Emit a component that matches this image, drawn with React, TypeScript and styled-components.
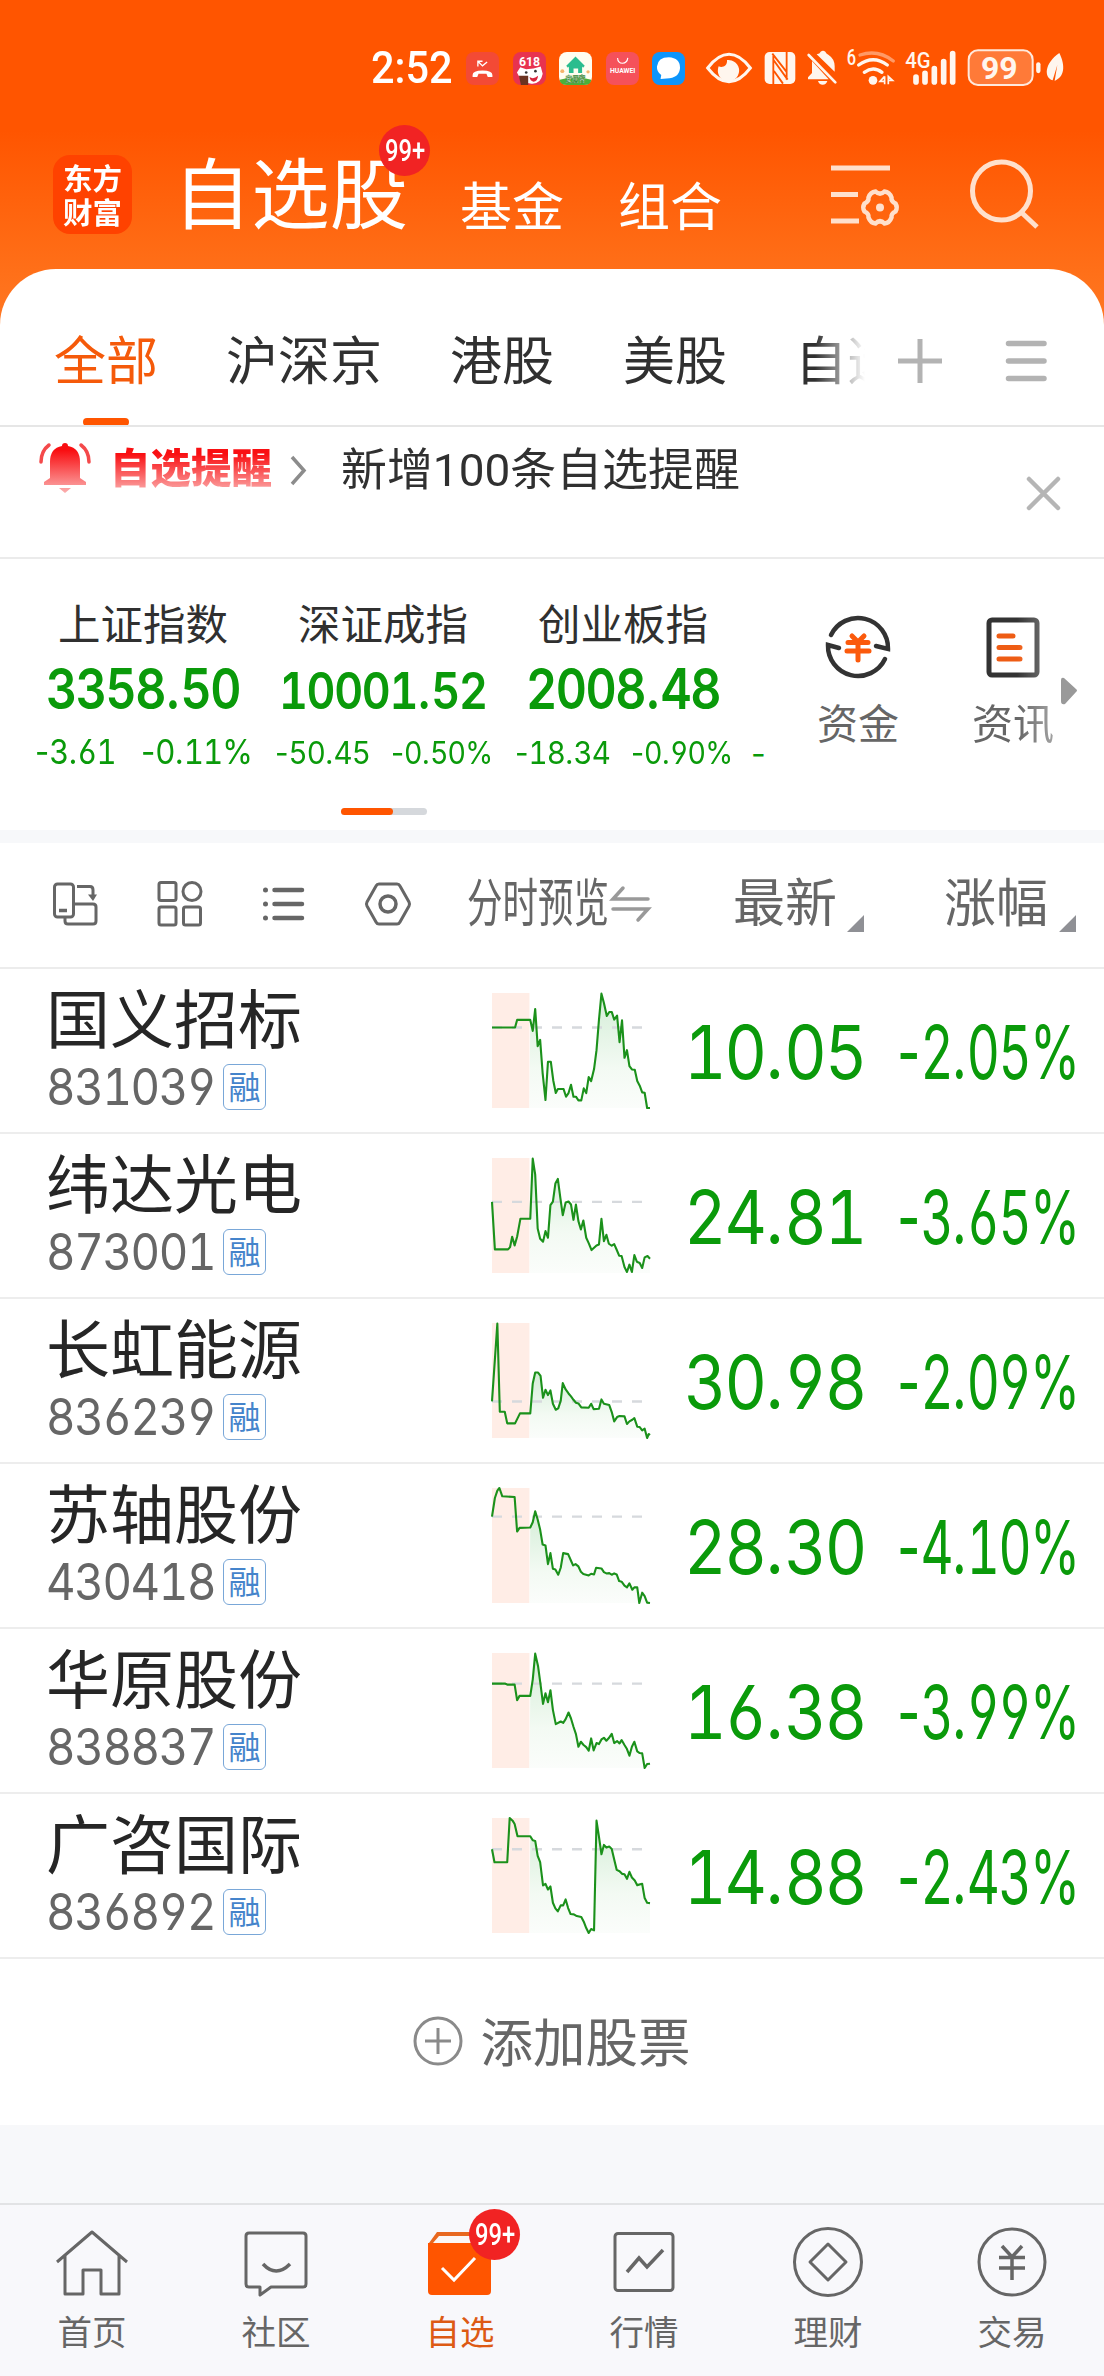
import React, { useLayoutEffect, useRef, useState } from 'react';
import styled, { createGlobalStyle } from 'styled-components';

const CJK = '"Noto Sans CJK SC", sans-serif';
const NUM = 'Inter, Roboto, "Noto Sans CJK SC", sans-serif';
const GREEN = '#0a9a0a';
const ORANGE = '#ff5500';

const Global = createGlobalStyle`
  * { box-sizing: border-box; }
  body { margin: 0; background: #f7f8fa; font-family: ${CJK}; color: #333; }
  svg { display: block; flex: none; overflow: visible; }
`;

/* ---------- text that is condensed or widened to a fixed measure ---------- */
const FitBox = styled.span<{ $w: number }>`
  display: block;
  flex: none;
  width: ${(p) => p.$w}px;
  white-space: nowrap;
`;
const FitInner = styled.span`
  display: inline-block;
  transform-origin: 0 50%;
`;
function Fit({ w, children }: { w: number; children: React.ReactNode }) {
  const ref = useRef<HTMLSpanElement>(null);
  const [scale, setScale] = useState(1);
  useLayoutEffect(() => {
    if (ref.current) setScale(w / ref.current.offsetWidth);
  }, [w, children]);
  return (
    <FitBox $w={w}>
      <FitInner ref={ref} style={{ transform: `scaleX(${scale})` }}>{children}</FitInner>
    </FitBox>
  );
}

/* digits are tabular, the signs between them keep their own widths */
const Digits = styled.span`
  font-feature-settings: 'tnum', 'cv03', 'cv04';
  letter-spacing: -0.03em;
`;
const Sign = styled.span`
  font-feature-settings: normal;
`;
function Figure({ value }: { value: string }) {
  return (
    <>
      {value.split(/([^0-9]+)/).filter(Boolean).map((part, i) =>
        /\d/.test(part) ? <Digits key={i}>{part}</Digits> : <Sign key={i}>{part}</Sign>,
      )}
    </>
  );
}

const Page = styled.div`
  width: 1104px;
  height: 2376px;
  display: flex;
  flex-direction: column;
  background: #f7f8fa;
  overflow: hidden;
`;

/* ---------- header ---------- */
const Top = styled.header`
  height: 340px;
  margin-bottom: -71px;
  flex: none;
  background: linear-gradient(180deg, #ff5500 0, #ff5500 130px, #ff7019 275px, #ff7a28 340px);
  color: #fff;
`;
const StatusBar = styled.div`
  height: 136px;
  padding-left: 371px;
  display: flex;
  align-items: center;
`;
const Clock = styled.div`
  font: 500 45px/50px Roboto, sans-serif;
  margin-right: 13px;
`;
const AppIcons = styled.div`
  display: flex;
  gap: 13.6px;
  margin-right: 21px;
`;
const Cluster = styled.div`
  display: flex;
`;
const TitleBar = styled.div`
  height: 133px;
  padding: 0 0 0 53px;
  display: flex;
`;
const Logo = styled.div`
  width: 79px;
  height: 79px;
  margin-top: 19px;
  border-radius: 17px;
  background: #ff4200;
  padding: 5px 0 0 10px;
  font: 700 29px/34px ${CJK};
`;
const MainTitle = styled.div`
  position: relative;
  margin: 6px 0 0 41px;
  font: 400 77px/96px ${CJK};
`;
const SubTitle = styled.div<{ $ml: number }>`
  margin: 33px 0 0 ${(p) => p.$ml}px;
  font: 400 52px/70px ${CJK};
`;
const HeadIcon = styled.div<{ $ml: number; $mt: number }>`
  margin: ${(p) => p.$mt}px 0 0 ${(p) => p.$ml}px;
`;
const Badge = styled.span<{ $x: number; $y: number }>`
  position: absolute;
  left: ${(p) => p.$x}px;
  top: ${(p) => p.$y}px;
  width: 51px;
  height: 51px;
  border-radius: 50%;
  background: #f12323;
  color: #fff;
  display: flex;
  justify-content: center;
  font: 500 32px/50px Roboto, sans-serif;
`;

/* ---------- tabs ---------- */
const Tabs = styled.nav`
  position: relative;
  height: 158px;
  flex: none;
  background: #fff;
  border-radius: 56px 56px 0 0;
  border-bottom: 2px solid #e6e6e6;
  padding-left: 54px;
  display: flex;
  font: 400 52px/70px ${CJK};
`;
const Tab = styled.div<{ $active?: boolean; $w: number; $gap: number }>`
  width: ${(p) => p.$w}px;
  margin-right: ${(p) => p.$gap}px;
  padding-top: 54px;
  flex: none;
  white-space: nowrap;
  overflow: hidden;
  color: ${(p) => (p.$active ? '#f55a0a' : '#303030')};
  &::after {
    content: '';
    display: ${(p) => (p.$active ? 'block' : 'none')};
    width: 46px;
    height: 8px;
    margin: 25px auto 0;
    border-radius: 4px;
    background: ${ORANGE};
  }
`;
const FadeTab = styled(Tab)`
  -webkit-mask-image: linear-gradient(90deg, #000 20px, transparent 70px);
  mask-image: linear-gradient(90deg, #000 20px, transparent 70px);
`;
const TabTool = styled.div<{ $mr: number; $mt: number }>`
  margin: ${(p) => p.$mt}px ${(p) => p.$mr}px 0 0;
`;

/* ---------- notice ---------- */
const Notice = styled.section`
  height: 132px;
  flex: none;
  background: #fff;
  border-bottom: 2px solid #ebebeb;
  padding-left: 39px;
  display: flex;
`;
const NoticeTag = styled.div`
  flex: none;
  width: 162px;
  height: 60px;
  margin: 9px 18px 0 19px;
  white-space: nowrap;
  font: 900 40.5px/60px ${CJK};
  background: linear-gradient(180deg, #f90f12 18px, #fb9a9a 52px);
  -webkit-background-clip: text;
  background-clip: text;
  color: transparent;
`;
const NoticeText = styled.div`
  margin: 14px 287px 0 35px;
  font: 400 45px/60px Roboto, ${CJK};
  color: #303030;
`;
const Shift = styled.div<{ $mt: number }>`
  margin-top: ${(p) => p.$mt}px;
`;

/* ---------- indices ---------- */
const Indices = styled.section`
  height: 271px;
  flex: none;
  background: #fff;
  display: flex;
`;
const IndexArea = styled.div`
  width: 768px;
  flex: none;
  overflow: hidden;
  display: flex;
  flex-direction: column;
`;
const IndexRow = styled.div`
  display: flex;
  padding-left: 23px;
`;
const IndexCell = styled.div`
  width: 240px;
  flex: none;
  display: flex;
  flex-direction: column;
  align-items: center;
  color: ${GREEN};
`;
const IndexName = styled.div`
  margin-top: 33px;
  font: 400 42.5px/60px ${CJK};
  color: #303030;
`;
const IndexValue = styled.div<{ $size: number; $lh: number }>`
  height: 69px;
  font: 600 ${(p) => p.$size}px/${(p) => p.$lh}px ${NUM};
`;
const IndexChange = styled.div<{ $size: number; $lh: number }>`
  width: 100%;
  height: 50px;
  padding: 0 10px 0 12px;
  display: flex;
  justify-content: space-between;
  font: 400 ${(p) => p.$size}px/${(p) => p.$lh}px ${NUM};
`;
const NextDash = styled.div`
  padding: 165px 0 0 8px;
  font: 400 32px/60px ${NUM};
  color: ${GREEN};
`;
const Pager = styled.div`
  width: 86px;
  height: 7px;
  margin: 24px 0 0 341px;
  border-radius: 4px;
  background: #d5d8dc;
  &::before {
    content: '';
    display: block;
    width: 52px;
    height: 7px;
    border-radius: 4px;
    background: ${ORANGE};
  }
`;
const Quick = styled.div<{ $ml: number; $fade?: boolean }>`
  margin-left: ${(p) => p.$ml}px;
  padding-top: 55px;
  display: flex;
  flex-direction: column;
  align-items: center;
  font: 400 41px/56px ${CJK};
  color: #666;
  ${(p) => p.$fade && 'mask-image: linear-gradient(90deg, #000 45px, rgba(0,0,0,.6) 82px);'}
`;
const QuickLabel = styled.div`
  margin-top: 13px;
  white-space: nowrap;
`;
const Band = styled.div`
  height: 13px;
  flex: none;
`;

/* ---------- table ---------- */
const Tools = styled.section`
  height: 126px;
  flex: none;
  background: #fff;
  border-bottom: 2px solid #ececec;
  padding: 0 0 2px 51px;
  display: flex;
  align-items: center;
  color: #666;
  font: 400 52px/70px ${CJK};
`;
const ToolIcon = styled.div<{ $mr: number }>`
  margin-right: ${(p) => p.$mr}px;
`;
const Column = styled.div<{ $mr: number; $gap: number }>`
  display: flex;
  flex: none;
  align-items: center;
  gap: ${(p) => p.$gap}px;
  margin-right: ${(p) => p.$mr}px;
  margin-top: -8px;
`;
const Swap = styled.div`
  margin-top: 7px;
`;
const Corner = styled.i`
  flex: none;
  width: 17px;
  height: 17px;
  margin-top: 47px;
  background: #8f9095;
  clip-path: polygon(100% 0, 100% 100%, 0 100%);
`;
const Row = styled.div`
  height: 165px;
  flex: none;
  background: #fff;
  border-bottom: 2px solid #ededed;
  padding-left: 46px;
  display: flex;
`;
const Stock = styled.div`
  width: 446px;
  flex: none;
  padding-top: 1px;
`;
const Name = styled.div`
  height: 91px;
  font: 400 64px/90px ${CJK};
  color: #262626;
`;
const CodeLine = styled.div`
  display: flex;
  align-items: center;
  gap: 8px;
`;
const Code = styled.div`
  font: 400 51px/52px ${NUM};
  color: #666;
`;
const Tag = styled.div`
  width: 43px;
  height: 46px;
  border: 1.5px solid #79a7d8;
  border-radius: 6px;
  text-align: center;
  font: 400 32px/40px ${CJK};
  color: #4584cb;
`;
const ChartBox = styled.div`
  width: 192px;
  flex: none;
  padding-top: 24px;
`;
const Price = styled.div<{ $w: number }>`
  width: ${(p) => p.$w}px;
  flex: none;
  font: 400 74px/166px ${NUM};
  color: ${GREEN};
`;
const AddRow = styled.div`
  height: 166px;
  flex: none;
  background: #fff;
  padding-bottom: 3px;
  display: flex;
  align-items: center;
  justify-content: center;
  gap: 17px;
  font: 400 52.5px/70px ${CJK};
  color: #666;
`;
const AddLabel = styled.div`
  margin-top: -4px;
`;

/* ---------- bottom navigation ---------- */
const BottomNav = styled.nav`
  margin-top: auto;
  height: 173px;
  flex: none;
  border-top: 2px solid #e2e3e5;
  background: #f8f8fb;
  display: grid;
  grid-template-columns: repeat(6, 184px);
`;
const NavItem = styled.div<{ $active?: boolean }>`
  position: relative;
  padding-top: 21px;
  display: flex;
  flex-direction: column;
  align-items: center;
  gap: 5px;
  font: 400 34.5px/50px ${CJK};
  color: ${(p) => (p.$active ? '#dd5a14' : '#666')};
`;

/* ---------- stock chart ---------- */
function Spark({ base, pts, id }: { base: number; pts: string; id: string }) {
  const list = pts.split(' ').map((s) => s.split(',').map(Number));
  const after = list.filter(([x]) => x >= 91);
  const area = `M${after.map((p) => p.join(' ')).join('L')}L384 346L91 346Z`;
  return (
    <svg width="158" height="115" viewBox="0 0 384 346" preserveAspectRatio="none">
      <defs>
        <linearGradient id={id} x1="0" y1="0" x2="0" y2="1">
          <stop offset="0" stopColor="#d3edd6" />
          <stop offset="0.65" stopColor="#f3faf3" />
          <stop offset="1" stopColor="#fbfdfb" />
        </linearGradient>
      </defs>
      <rect x="0" y="0" width="91" height="346" fill="#ffede6" />
      <path d={area} fill={`url(#${id})`} />
      <path d={`M0 ${base}H365`} stroke="#d6d9dd" strokeWidth="2.4" strokeDasharray="10 10" vectorEffect="non-scaling-stroke" />
      <path d={`M${list.map((p) => p.join(' ')).join('L')}`} fill="none" stroke="#1b911b" strokeWidth="2.1" strokeLinejoin="round" vectorEffect="non-scaling-stroke" />
    </svg>
  );
}

const STOCKS = [
  { name: '国义招标', code: '831039', price: '10.05', pct: '-2.05%', base: 104,
    pts: '0,104 56,104 61,81 93,81 99,114 105,48 111,160 117,141 123,240 130,322 136,207 143,207 149,264 155,301 160,289 174,289 180,312 186,301 192,276 198,312 204,312 210,323 217,323 223,287 229,301 235,253 241,265 248,229 254,172 260,80 266,2 272,30 279,69 285,57 291,57 297,80 304,68 310,148 316,82 322,195 328,172 334,220 340,230 347,231 353,265 359,279 365,299 371,300 377,346 384,346' },
  { name: '纬达光电', code: '873001', price: '24.81', pct: '-3.65%', base: 132,
    pts: '0,132 7,275 39,275 44,268 49,237 55,263 61,237 69,183 93,183 99,2 105,50 111,212 117,243 124,252 130,220 136,240 142,142 148,131 154,77 160,63 166,119 172,172 179,134 186,131 192,140 198,186 204,140 210,190 216,215 222,188 229,240 235,256 242,277 254,263 260,260 266,183 272,250 278,231 284,258 291,264 297,259 303,276 309,294 315,295 322,328 328,343 334,321 340,343 346,292 352,312 359,316 365,331 371,299 378,295 384,303' },
  { name: '长虹能源', code: '836239', price: '30.98', pct: '-2.09%', base: 236,
    pts: '0,236 13,2 19,267 31,267 37,302 56,302 62,287 68,272 93,272 99,182 105,149 112,149 118,159 124,225 130,201 136,217 142,203 148,243 155,261 161,257 167,234 172,181 179,200 186,212 192,221 198,231 204,240 210,242 217,254 235,255 241,243 247,259 260,258 266,230 272,243 285,247 291,268 297,296 304,283 310,280 322,281 328,304 334,296 341,291 346,286 353,312 359,313 365,323 371,318 377,346 381,334 384,337' },
  { name: '苏轴股份', code: '430418', price: '28.30', pct: '-4.10%', base: 86,
    pts: '0,86 7,30 13,8 18,0 25,25 55,27 61,131 67,120 93,119 99,103 105,70 111,95 117,125 123,170 130,173 136,229 142,196 148,243 154,245 161,261 167,240 173,196 185,199 191,216 197,233 203,229 210,236 216,252 222,259 235,263 241,258 248,260 253,240 266,242 272,253 278,257 285,256 291,261 297,257 303,260 309,280 315,282 322,294 328,299 334,287 341,306 346,299 353,299 358,346 365,315 371,325 377,345 384,346' },
  { name: '华原股份', code: '838837', price: '16.38', pct: '-3.99%', base: 92,
    pts: '0,92 31,92 37,95 55,95 61,142 67,129 93,129 99,80 105,2 112,40 118,95 124,153 130,121 136,148 142,112 148,171 155,214 167,206 173,210 179,199 186,179 192,197 198,222 204,244 210,282 216,267 222,276 229,283 235,294 241,257 247,293 254,271 260,274 266,260 272,255 278,264 284,256 291,243 297,271 304,265 310,272 315,262 322,277 328,289 334,309 340,282 346,267 353,296 359,301 365,302 371,346 377,334 384,333' },
  { name: '广咨国际', code: '836892', price: '14.88', pct: '-2.43%', base: 94,
    pts: '0,94 6,133 37,133 43,0 50,8 55,18 62,55 93,55 99,67 105,69 111,114 117,133 124,203 130,198 136,215 142,206 148,255 154,272 160,281 167,263 173,263 179,245 185,271 191,289 199,290 206,295 217,298 223,312 229,331 235,346 241,334 248,338 254,8 260,57 266,109 272,81 278,89 285,86 291,93 297,125 303,156 310,160 316,168 322,169 328,183 334,162 340,179 347,188 353,202 365,198 371,241 377,255 384,256' },
];

const INDICES = [
  { name: '上证指数', value: '3358.50', vs: 56, vl: 74, vw: 194, chg: '-3.61', pct: '-0.11%', cs: 34, cl: 62, cw: 81, pw: 112 },
  { name: '深证成指', value: '10001.52', vs: 51, vl: 78, vw: 208, chg: '-50.45', pct: '-0.50%', cs: 31, cl: 64, cw: 95, pw: 102 },
  { name: '创业板指', value: '2008.48', vs: 56, vl: 74, vw: 194, chg: '-18.34', pct: '-0.90%', cs: 31, cl: 64, cw: 95, pw: 102 },
];

const W = '#fff6ee';

const StatusIcons = () => (
  <Cluster>
    <svg width="51.7" height="42" viewBox="438 20 155 126">
      <path d="M443 83C466 53 485 42 507 42S548 53 571 83C548 113 529 124 507 124S466 113 443 83Z" fill="none" stroke={W} strokeWidth="9" />
      <path d="M476 78C487 84 503 76 501 59A32 32 0 1 1 476 78Z" fill={W} />
    </svg>
    <svg width="43.3" height="42" viewBox="593 20 130 126">
      <rect x="613" y="35" width="92" height="96" rx="15" fill={W} />
      <path d="M639 134V46M639 58L682 118M679 33V118M636 40L680 96M641 92L668 130" fill="none" stroke={ORANGE} strokeWidth="5.500" />
    </svg>
    <svg width="41" height="42" viewBox="723 20 123 126">
      <path d="M756 62L806 117H744V111L756 98ZM770 42Q780 40 782 34Q789 29 796 34Q798 40 806 44Q824 56 824 78V94Z" fill={W} />
      <path d="M746 44L826 126" stroke={W} strokeWidth="8" strokeLinecap="round" />
      <path d="M774 122H802Q799 133 788 133T774 122Z" fill={W} />
    </svg>
    <svg width="58.3" height="42" viewBox="846 20 175 126">
      <g fill="none" strokeWidth="10" strokeLinecap="round">
        <path d="M900 44Q954 26 1000 62" stroke="#ff9a66" />
        <path d="M896 74Q940 42 982 74M913 96Q940 76 966 96" stroke={W} />
      </g>
      <circle cx="939" cy="120" r="13" fill={W} />
      <path d="M974 108V132M974 108L960 123H976M985 132V108L998 120H985" fill="none" stroke={W} strokeWidth="5" />
      <text x="860" y="75" fontFamily="Roboto" fontWeight="500" fontSize="64" textLength="28" lengthAdjust="spacingAndGlyphs" fill={W}>6</text>
    </svg>
    <svg width="61" height="42" viewBox="1021 20 183 126">
      <text x="1034" y="82" fontFamily="Roboto" fontWeight="500" fontSize="66" textLength="76" lengthAdjust="spacingAndGlyphs" fill={W}>4G</text>
      <path d="M1066 110V125M1093 99V125M1121 85V125M1149 64V125M1176 40V125" stroke={W} strokeWidth="17" strokeLinecap="round" />
    </svg>
    <svg width="82" height="42" viewBox="1204 20 246 126">
      <rect x="1224" y="30" width="192" height="104" rx="28" fill="#ff7a38" stroke="#ffe9dc" strokeWidth="6" />
      <path d="M1433 72V92" stroke={W} strokeWidth="13" strokeLinecap="round" />
      <text x="1261" y="115" fontFamily="Roboto" fontWeight="700" fontSize="94" textLength="110" lengthAdjust="spacingAndGlyphs" fill={W}>99</text>
    </svg>
    <svg width="23.3" height="42" viewBox="1450 20 70 126">
      <path d="M1496 38C1510 66 1518 106 1482 122L1490 74L1476 120C1450 112 1450 70 1496 38Z" fill={W} />
    </svg>
  </Cluster>
);

const AppTray = () => (
  <AppIcons>
    <svg width="33" height="33" viewBox="0 0 100 100">
      <rect width="100" height="100" rx="24" fill="#f34a35" />
      <path d="M20 70Q20 56 50 56T80 70V76H66L62 66H38L34 76H20Z" fill="#fff" />
      <path d="M36 44V28H50M36 28L50 42L64 30" fill="none" stroke="#fff" strokeWidth="4" />
    </svg>
    <svg width="33" height="33" viewBox="0 0 100 100">
      <rect width="100" height="100" rx="24" fill="#e8334f" />
      <text x="18" y="42" fontFamily="Roboto" fontWeight="700" fontSize="40" textLength="64" lengthAdjust="spacingAndGlyphs" fill="#fff">618</text>
      <path d="M12 62L22 46L40 52L62 50L84 44L90 66Q84 98 56 96Q24 92 12 62Z" fill="#fff" />
      <circle cx="40" cy="62" r="4" fill="#333" /><circle cx="68" cy="58" r="4" fill="#333" />
      <path d="M50 76Q62 84 76 72Q74 90 62 90Q52 88 50 76Z" fill="#d8243c" />
      <path d="M18 72H46V100H24Z" fill="#6b3320" />
    </svg>
    <svg width="33" height="33" viewBox="0 0 100 100">
      <rect width="100" height="100" rx="24" fill="#fffdf0" />
      <path d="M2 84Q50 70 98 84Q96 100 76 100H24Q4 100 2 84Z" fill="#4caf3a" />
      <path d="M22 42L50 14L78 42L73 48L70 44V64H58V50H44V64H30V44L27 48Z" fill="#2bbd8e" />
      <text x="20" y="92" fontFamily="Noto Sans CJK SC" fontWeight="700" fontSize="24" textLength="60" lengthAdjust="spacingAndGlyphs" fill="#fff" stroke="#2f7d2a" strokeWidth="1.5">安居客</text>
      <circle cx="10" cy="58" r="6" fill="#f6b46a" /><circle cx="88" cy="60" r="5" fill="#f6b46a" />
    </svg>
    <svg width="33" height="33" viewBox="0 0 100 100">
      <rect width="100" height="100" rx="24" fill="#f5515a" />
      <path d="M35 18Q36 34 50 34T66 18" fill="none" stroke="#fff" strokeWidth="3.5" />
      <text x="12" y="63" fontFamily="Roboto" fontWeight="700" fontSize="20" textLength="77" lengthAdjust="spacingAndGlyphs" fill="#fff">HUAWEI</text>
    </svg>
    <svg width="33" height="33" viewBox="0 0 100 100">
      <rect width="100" height="100" rx="24" fill="#0d95fb" />
      <path d="M26 82L28 70Q14 60 15 44Q18 16 51 16Q85 18 85 48Q83 80 44 80Z" fill="#fff" />
    </svg>
  </AppIcons>
);

const s = { fill: 'none', stroke: '#666', strokeWidth: 3 } as const;

export default function App() {
  return (
    <Page>
      <Global />
      <Top>
        <StatusBar>
          <Clock><Fit w={82}>2:52</Fit></Clock>
          <AppTray />
          <StatusIcons />
        </StatusBar>
        <TitleBar>
          <Logo>
            <Fit w={59}>东方</Fit>
            <Fit w={59}>财富</Fit>
          </Logo>
          <MainTitle>
            <Fit w={235}>自选股</Fit>
            <Badge $x={206} $y={-17}><Fit w={40}>99+</Fit></Badge>
          </MainTitle>
          <SubTitle $ml={52}>基金</SubTitle>
          <SubTitle $ml={54}>组合</SubTitle>
          <HeadIcon $ml={109} $mt={28}>
            <svg width="70" height="64" viewBox="0 0 70 64" fill="none" stroke="#ffe0cc" strokeWidth="5">
              <path d="M0 4H59M0 30.500H27M0 57H28" />
              <path d="M44.500 27.500Q49 32 53.500 27.500Q58.500 28 60.500 33.500Q60 37.500 64.500 39.500Q67 43.500 64.500 47.500Q60 49.500 60.500 53.500Q58.500 59 53.500 59.500Q49 55 44.500 59.500Q39.500 59 37.500 53.500Q38 49.500 33.500 47.500Q31 43.500 33.500 39.500Q38 37.500 37.500 33.500Q39.500 28 44.500 27.500Z" strokeWidth="4.500" />
              <circle cx="49" cy="43.500" r="4" fill="#ffe0cc" stroke="none" />
            </svg>
          </HeadIcon>
          <HeadIcon $ml={69} $mt={23}>
            <svg width="70" height="70" viewBox="0 0 70 70" fill="none" stroke="#ffe0cc" strokeWidth="5">
              <circle cx="31.500" cy="32" r="29" />
              <path d="M51 53L67 68" />
            </svg>
          </HeadIcon>
        </TitleBar>
      </Top>

      <Tabs>
        <Tab $active $w={104} $gap={68}>全部</Tab>
        <Tab $w={156} $gap={68}>沪深京</Tab>
        <Tab $w={104} $gap={69}>港股</Tab>
        <Tab $w={104} $gap={68}>美股</Tab>
        <FadeTab $w={74} $gap={29}>自选</FadeTab>
        <TabTool $mr={64} $mt={70}>
          <svg width="44" height="44" viewBox="0 0 44 44"><path d="M0 22H44M22 0V44" stroke="#b3b3b3" strokeWidth="5" /></svg>
        </TabTool>
        <TabTool $mr={0} $mt={72}>
          <svg width="41" height="42" viewBox="0 0 41 42"><path d="M2.500 2.500H38M2.500 20H38M2.500 37.500H38" stroke="#b3b3b3" strokeWidth="5.500" strokeLinecap="round" /></svg>
        </TabTool>
      </Tabs>

      <Notice>
        <Shift $mt={15}>
          <svg width="52" height="51" viewBox="0 0 52 51">
            <defs>
              <linearGradient id="bell" x1="0" y1="0" x2="0" y2="1">
                <stop offset="0.150" stopColor="#f90f12" />
                <stop offset="1" stopColor="#fbb0b0" />
              </linearGradient>
            </defs>
            <path d="M23 4Q23 1 26 1T29 4Q41 6 41 20V36L47 40V43H5V40L11 36V20Q11 6 23 4ZM20 46H32L26 51Z" fill="url(#bell)" />
            <path d="M10 3Q2 9 2 20M42 3Q50 9 50 20" fill="none" stroke="#f4494a" strokeWidth="3.500" strokeLinecap="round" />
          </svg>
        </Shift>
        <NoticeTag>自选提醒</NoticeTag>
        <Shift $mt={28}>
          <svg width="16" height="32" viewBox="0 0 16 32"><path d="M2 2L14 15.500L2 29" fill="none" stroke="#8c8c8c" strokeWidth="3.500" /></svg>
        </Shift>
        <NoticeText><Fit w={399}>新增100条自选提醒</Fit></NoticeText>
        <Shift $mt={50}>
          <svg width="33" height="33" viewBox="0 0 33 33"><path d="M2 2L31 31M31 2L2 31" stroke="#b5b5b5" strokeWidth="4.500" strokeLinecap="round" /></svg>
        </Shift>
      </Notice>

      <Indices>
        <IndexArea>
          <IndexRow>
            {INDICES.map((i) => (
              <IndexCell key={i.name}>
                <IndexName>{i.name}</IndexName>
                <IndexValue $size={i.vs} $lh={i.vl}><Fit w={i.vw}><Figure value={i.value} /></Fit></IndexValue>
                <IndexChange $size={i.cs} $lh={i.cl}>
                  <Fit w={i.cw}><Figure value={i.chg} /></Fit>
                  <Fit w={i.pw}><Figure value={i.pct} /></Fit>
                </IndexChange>
              </IndexCell>
            ))}
            <NextDash>-</NextDash>
          </IndexRow>
          <Pager />
        </IndexArea>
        <Quick $ml={49}>
          <svg width="66" height="66" viewBox="0 0 66 66" fill="none">
            <path d="M6 21A30 30 0 0 1 63 35L51 32M60 45A30 30 0 0 1 3 31L14 34" stroke="#333" strokeWidth="4.500" strokeLinecap="round" />
            <path d="M27 22L33 28L39 22M23 28.500H43M22 37H44M33 28V46" stroke="#fb5a0c" strokeWidth="5" strokeLinecap="round" strokeLinejoin="round" />
          </svg>
          <QuickLabel>资金</QuickLabel>
        </Quick>
        <Quick $ml={73} $fade>
          <svg width="66" height="66" viewBox="0 0 66 66" fill="none">
            <rect x="9" y="6" width="48" height="55" rx="3" stroke="#333" strokeWidth="5" />
            <path d="M19 22H33M19 33.500H40M19 45H40" stroke="#ee5c14" strokeWidth="5" strokeLinecap="round" />
          </svg>
          <QuickLabel>资讯</QuickLabel>
        </Quick>
        <Shift $mt={118}>
          <svg width="24" height="28" viewBox="0 0 24 28"><path d="M7 3Q7 0 10 1L22 12Q24 13.500 22 15L11 27Q7 28 7 24Z" fill="#999" /></svg>
        </Shift>
      </Indices>
      <Band />

      <Tools>
        <ToolIcon $mr={58}>
          <svg width="48" height="46" viewBox="0 0 48 46" {...s}>
            <rect x="3.500" y="3" width="19" height="33" rx="3" />
            <path d="M8 29.500H16" strokeWidth="3.500" />
            <path d="M14 36V40Q14 43 17 43H42Q45 43 45 40V26Q45 23 42 23H23" />
            <path d="M26 5.500H39Q42 5.500 42 9V16" />
            <path d="M37 13.500H46L42 20Z" fill="#666" stroke="none" />
          </svg>
        </ToolIcon>
        <ToolIcon $mr={60}>
          <svg width="46" height="46" viewBox="0 0 46 46" {...s}>
            <rect x="2" y="1.500" width="17" height="18" rx="2" />
            <circle cx="35" cy="10.500" r="9" />
            <rect x="2" y="26" width="17" height="18" rx="2" />
            <rect x="26.500" y="26" width="17" height="18" rx="2" />
          </svg>
        </ToolIcon>
        <ToolIcon $mr={60}>
          <svg width="42" height="36" viewBox="0 0 42 36" stroke="#666" strokeLinecap="round">
            <path d="M11.500 4H39M11.500 18H39M11.500 32H39" strokeWidth="4.500" />
            <path d="M2.500 4V4M2.500 18V18M2.500 32V32" strokeWidth="5" />
          </svg>
        </ToolIcon>
        <ToolIcon $mr={56}>
          <svg width="46" height="44" viewBox="0 0 46 44" {...s}>
            <path d="M14 2H32Q34 2 35 4L44 20Q45 22 44 24L35 40Q34 42 32 42H14Q12 42 11 40L2 24Q1 22 2 20L11 4Q12 2 14 2Z" />
            <circle cx="23" cy="22" r="8" strokeWidth="3.500" />
          </svg>
        </ToolIcon>
        <Column $mr={83} $gap={2}>
          <Fit w={142}>分时预览</Fit>
          <Swap>
            <svg width="39" height="38" viewBox="0 0 39 38" fill="none" stroke="#999" strokeWidth="3.500" strokeLinecap="round">
              <path d="M12 3L2 14H37M2 24H37L27 35" />
            </svg>
          </Swap>
        </Column>
        <Column $mr={80} $gap={10}>最新<Corner /></Column>
        <Column $mr={0} $gap={11}>涨幅<Corner /></Column>
      </Tools>

      {STOCKS.map((r) => (
        <Row key={r.code}>
          <Stock>
            <Name>{r.name}</Name>
            <CodeLine>
              <Code><Fit w={169}><Figure value={r.code} /></Fit></Code>
              <Tag>融</Tag>
            </CodeLine>
          </Stock>
          <ChartBox><Spark id={`g${r.code}`} base={r.base} pts={r.pts} /></ChartBox>
          <Price $w={213}><Fit w={181}><Figure value={r.price} /></Fit></Price>
          <Price $w={200}><Fit w={183}><Figure value={r.pct} /></Fit></Price>
        </Row>
      ))}

      <AddRow>
        <svg width="50" height="50" viewBox="0 0 50 50" fill="none" stroke="#8a8a8a" strokeWidth="3">
          <circle cx="25" cy="25" r="23" />
          <path d="M12 25H38M25 12V38" />
        </svg>
        <AddLabel>添加股票</AddLabel>
      </AddRow>

      <BottomNav>
        <NavItem>
          <svg width="74" height="74" viewBox="0 0 74 74" {...s}>
            <path d="M2 36L37 6L72 36M10 30V68H28V44H46V68H64V30" strokeLinejoin="round" />
          </svg>
          首页
        </NavItem>
        <NavItem>
          <svg width="74" height="74" viewBox="0 0 74 74" {...s}>
            <path d="M10 7H64Q67 7 67 10V58Q67 61 64 61H32L21 69V61H10Q7 61 7 58V10Q7 7 10 7Z" strokeLinejoin="round" />
            <path d="M24 38Q37 52 51 38" strokeWidth="3.500" />
          </svg>
          社区
        </NavItem>
        <NavItem $active>
          <svg width="74" height="74" viewBox="0 0 74 74">
            <path d="M14 6H62V20H6V17Z" fill="#e8681e" />
            <path d="M16 10H60V17H10Z" fill="#fbf7f5" />
            <path d="M5 17H68V65Q68 69 64 69H9Q5 69 5 65Z" fill={ORANGE} />
            <path d="M19 42L31 54L52 32" fill="none" stroke="#fff" strokeWidth="3" />
          </svg>
          自选
          <Badge $x={101} $y={4}><Fit w={40}>99+</Fit></Badge>
        </NavItem>
        <NavItem>
          <svg width="74" height="74" viewBox="0 0 74 74" {...s}>
            <rect x="8" y="7.500" width="58" height="57" rx="3" />
            <path d="M20 46L32 32L40 41L56 24" strokeWidth="3.500" />
          </svg>
          行情
        </NavItem>
        <NavItem>
          <svg width="74" height="74" viewBox="0 0 74 74" {...s}>
            <circle cx="37" cy="36" r="33.500" />
            <path d="M37 18L55 36L37 54L19 36Z" strokeLinejoin="round" />
          </svg>
          理财
        </NavItem>
        <NavItem>
          <svg width="74" height="74" viewBox="0 0 74 74" {...s}>
            <circle cx="37" cy="36" r="33" />
            <path d="M27 20L37 31L47 20M24 31.500H50M24 42H50M37 31V54" strokeWidth="3.500" />
          </svg>
          交易
        </NavItem>
      </BottomNav>
    </Page>
  );
}
